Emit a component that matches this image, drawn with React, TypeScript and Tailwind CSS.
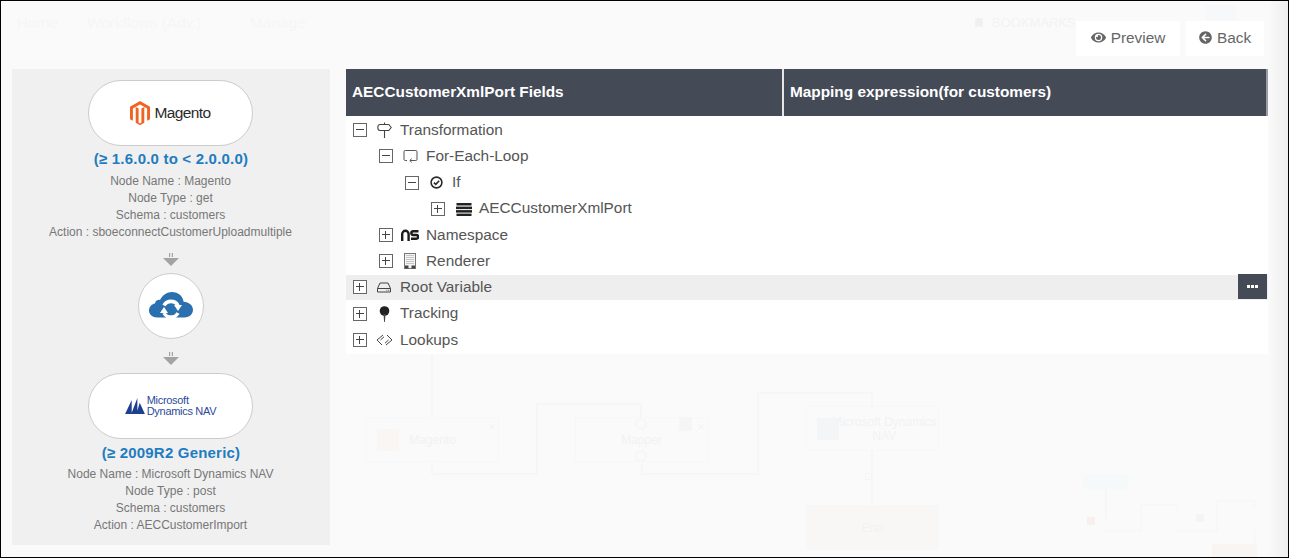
import { FaEye, FaArrowCircleLeft, FaBookmark, FaTimes } from "react-icons/fa";

const SANS = "font-['Liberation_Sans',Arial,sans-serif]";

function Signpost() {
  return (
    <svg width="15" height="16" viewBox="0 0 15 16" fill="none" stroke="#444" strokeWidth="1.1">
      <path d="M7.5 0.5v2M7.5 8.5V16" />
      <path d="M3 2.5h8.8L14.2 5.5 11.8 8.5H3C1.6 8.5 0.8 7 0.8 5.5S1.6 2.5 3 2.5z" />
    </svg>
  );
}

function LoopIcon() {
  return (
    <svg width="15" height="14" viewBox="0 0 15 14" fill="none" stroke="#555" strokeWidth="1">
      <path d="M4 11.5H2.2A1.2 1.2 0 0 1 1 10.3V2.7a1.2 1.2 0 0 1 1.2-1.2h10.6A1.2 1.2 0 0 1 14 2.7v7.6a1.2 1.2 0 0 1-1.2 1.2H7" />
      <path d="M8.8 9.6 6.8 11.5l2 1.9" />
    </svg>
  );
}

function CheckIcon() {
  return (
    <svg width="13" height="13" viewBox="0 0 13 13" fill="none" stroke="#2b2b2b" strokeWidth="1.6">
      <circle cx="6.5" cy="6.5" r="5.4" />
      <path d="M3.9 6.6 5.8 8.4 9.2 4.8" />
    </svg>
  );
}

function StackIcon() {
  return (
    <svg width="16" height="14" viewBox="0 0 16 14" fill="#222">
      <rect x="0.5" y="1" width="15" height="2.5" />
      <rect x="0" y="4.6" width="16" height="2.5" />
      <rect x="0" y="8.1" width="16" height="2.5" />
      <rect x="0.5" y="11.6" width="15" height="2.4" />
    </svg>
  );
}

function NsIcon() {
  return (
    <svg width="18" height="12" viewBox="0 0 18 12" fill="none" stroke="#1c1c1c" strokeWidth="2.4">
      <path d="M1.2 12V5a3.2 3.2 0 0 1 6.4 0v7" />
      <path d="M17.5 2.2h-5.3a1.9 1.9 0 0 0 0 3.8h3a1.9 1.9 0 0 1 0 3.8H10" />
    </svg>
  );
}

function BuildingIcon() {
  return (
    <svg width="12" height="16" viewBox="0 0 12 16" fill="none">
      <rect x="0.5" y="0.5" width="11" height="15" stroke="#777" fill="#f4f4f4" />
      <path d="M2.5 2.5h7M2.5 4.5h7M2.5 6.5h7M2.5 8.5h7M2.5 10.5h7" stroke="#999" strokeDasharray="1 1" />
      <rect x="1" y="12.5" width="3.5" height="3" fill="#444" />
      <rect x="7.5" y="12.5" width="3.5" height="3" fill="#444" />
    </svg>
  );
}

function DriveIcon() {
  return (
    <svg width="14" height="11" viewBox="0 0 14 11" fill="none" stroke="#444" strokeWidth="1">
      <path d="M3 1h8l2.5 5.5V10H.5V6.5z" />
      <path d="M.5 6.5h13" />
      <path d="M9.5 8.3h.8M11.3 8.3h.8" />
    </svg>
  );
}

function PinIcon() {
  return (
    <svg width="11" height="16" viewBox="0 0 11 16" fill="#222">
      <circle cx="5.5" cy="5" r="4.8" />
      <path d="M4.5 8h2L5.9 16H5.1z" fill="#444" />
    </svg>
  );
}

function LookupIcon() {
  return (
    <svg width="17" height="12" viewBox="0 0 17 12" fill="none" stroke="#444" strokeWidth="1">
      <path d="M7 1 1 6l5 5M4.5 6 8 2.8" />
      <path d="M10 11l6-5-5-5M12.5 6 9 9.2" />
    </svg>
  );
}

function Toggle({ open }: { open: boolean }) {
  return (
    <span className="relative h-[14px] w-[14px] shrink-0 border border-[#666] bg-white">
      <span className="absolute left-[2px] top-[5px] h-px w-[8px] bg-[#444]" />
      {!open && <span className="absolute left-[5px] top-[2px] h-[8px] w-px bg-[#444]" />}
    </span>
  );
}

const rows = [
  { label: "Transformation", depth: 0, open: true, icon: <Signpost /> },
  { label: "For-Each-Loop", depth: 1, open: true, icon: <LoopIcon /> },
  { label: "If", depth: 2, open: true, icon: <CheckIcon /> },
  { label: "AECCustomerXmlPort", depth: 3, open: false, icon: <StackIcon /> },
  { label: "Namespace", depth: 1, open: false, icon: <NsIcon /> },
  { label: "Renderer", depth: 1, open: false, icon: <BuildingIcon /> },
  { label: "Root Variable", depth: 0, open: false, icon: <DriveIcon />, active: true },
  { label: "Tracking", depth: 0, open: false, icon: <PinIcon /> },
  { label: "Lookups", depth: 0, open: false, icon: <LookupIcon /> },
];

function TreeRow({ row }: { row: (typeof rows)[number] }) {
  const indent = ["pl-[7px]", "pl-[33px]", "pl-[59px]", "pl-[85px]"][row.depth];
  const deep = row.depth === 3;
  return (
    <div
      className={`relative flex items-center ${indent} ${
        row.active ? "mb-[1.25px] h-[25px] bg-[#eeeeee]" : "h-[26.25px]"
      }`}
    >
      <Toggle open={row.open} />
      <span className={`flex h-4 w-6 shrink-0 items-center justify-center ${deep ? "ml-[7px]" : "ml-[5px]"}`}>{row.icon}</span>
      <span className={`text-[15.36px] text-[#555] ${deep ? "ml-[3px]" : "ml-1"} ${row.active ? "" : "-translate-y-px"}`}>
        {row.label}
      </span>
      {row.active && (
        <span className="absolute -top-px right-px flex h-[25px] w-[29px] items-center justify-center gap-px bg-[#454a57]">
          <span className="h-[3px] w-[3px] bg-white" />
          <span className="h-[3px] w-[3px] bg-white" />
          <span className="h-[3px] w-[3px] bg-white" />
        </span>
      )}
    </div>
  );
}

function MagentoLogo() {
  return (
    <div className="flex items-center gap-[4px]">
      <svg width="20" height="24" viewBox="0 0 20 24">
        <path fill="#f26322" d="M10 0 20 5.8v12.4l-2.9 1.6V7.5L10 3.4 2.9 7.5v12.3L0 18.2V5.8z" />
        <path fill="#f26322" d="M8.6 7.5v14.1L10 22.4l1.4-.8V7.5l2.9-1.6v15.9L10 24.2l-4.3-2.4V5.9z" />
      </svg>
      <span className="text-[15.5px] tracking-[-0.6px] text-[#2b2b2b]">Magento</span>
    </div>
  );
}

function CloudLogo() {
  return (
    <svg width="44" height="26" viewBox="0 0 44 26">
      <path fill="#2a70ae" d="M8 25.5C3.5 25.5 0 22.5 0 18.5c0-3.6 2.4-6.3 6-7 .4-2.6 2.6-4 5-3.6C13.4 3.2 18 0 23 0c6.3 0 11 4.4 11.6 9.8 5.3.1 9.4 3.7 9.4 8 0 4.4-3.4 7.7-8.6 7.7z" />
      <path fill="none" stroke="#fff" strokeWidth="3.6" d="M15 13.5A8 8 0 0 1 29 13.5M29 21A8 8 0 0 1 15 21" />
      <path fill="#fff" d="M25 13h8l-4 6zM11 21h8l-4-6z" />
    </svg>
  );
}

function DynamicsLogo() {
  return (
    <div className="flex items-center gap-[2px]">
      <svg width="20" height="17" viewBox="0 0 21 18">
        <path fill="#1d3f8f" d="M0 17 7 2v15zM6.5 17 13 0v17zM12 17 15.5 5 21 17z" />
      </svg>
      <span className="flex flex-col text-[11px] leading-[11.5px] tracking-[-0.3px] text-[#2c4a9a]">
        <span>Microsoft</span>
        <span>Dynamics NAV</span>
      </span>
    </div>
  );
}

function Pill({ children }: { children: React.ReactNode }) {
  return (
    <div className="mr-px flex h-[66px] w-[165px] items-center justify-center rounded-[33px] border border-[#cccccc] bg-white">
      {children}
    </div>
  );
}

function DownArrow() {
  return (
    <svg width="16" height="14" viewBox="0 0 16 14" fill="#a3a3a3">
      <path d="M6 0h1.2v4H6zM8.8 0H10v4H8.8z" />
      <path d="M0 5h16l-8 8z" />
    </svg>
  );
}

function NodeInfo({ title, lines, low }: { title: string; lines: string[]; low?: boolean }) {
  return (
    <div className="flex flex-col items-center">
      <div className={`mt-1 text-[15px] font-bold leading-[18px] tracking-[0.2px] text-[#1f7cc0] ${low ? "translate-y-px" : ""}`}>
        {title}
      </div>
      <div className="mr-px mt-[5px] flex flex-col items-center text-[12px] leading-[17px] text-[#777777]">
        {lines.map((l) => (
          <div key={l}>{l}</div>
        ))}
      </div>
    </div>
  );
}

function GhostNode({ className, label }: { className: string; label: string }) {
  return (
    <div className={`absolute flex items-center justify-center border border-[#f7f7f7] text-[12px] text-[#f2f2f2] ${className}`}>
      {label}
    </div>
  );
}

/* the page behind the modal, barely visible through the white overlay */
function Backdrop() {
  return (
    <div className="absolute inset-0">
      <div className="absolute left-[16px] top-[10px] text-[15.36px] text-[#f6f6f6]">Home</div>
      <div className="absolute left-[86px] top-[10px] text-[15.36px] text-[#f6f6f6]">Workflows (Adv.)</div>
      <div className="absolute left-[249px] top-[10px] text-[15.36px] text-[#f6f6f6]">Manage</div>
      <div className="absolute left-[973px] top-[12px] flex items-center gap-2 text-[13px] text-[#f3f3f3]">
        <FaBookmark className="h-[10px] w-[10px] text-[#f0f0f0]" />
        BOOKMARKS
      </div>
      <div className="absolute left-[1205px] top-[4px] h-[17px] w-[30px] bg-[#f7f8f9]" />

      <svg className="absolute left-0 top-0" width="1289" height="558" fill="none" stroke="#f5f5f5" strokeWidth="1.5">
        <path d="M431 354v62" />
        <path d="M431 462v11h105v-70h104v14" />
        <path d="M641 462v11h116v-81h114v13" />
        <path d="M871 450v54" />
        <path d="M1105 488v30" />
        <path d="M1104 530h36v-26h36v6M1176 530h40v-30h38v6M1254 528v22" strokeWidth="1" />
        <circle cx="640" cy="423" r="5" />
        <circle cx="640" cy="455" r="5" />
      </svg>

      <GhostNode className="left-[365px] top-[416px] h-[45px] w-[133px]" label="Magento" />
      <div className="absolute left-[376px] top-[428px] h-[22px] w-[22px] bg-[#f9f6f3]" />
      <GhostNode className="left-[574px] top-[416px] h-[45px] w-[133px]" label="Mapper" />
      <div className="absolute left-[678px] top-[416px] h-[14px] w-[13px] bg-[#f5f5f5]" />
      <GhostNode className="left-[805px] top-[405px] h-[45px] w-[133px] pl-6 text-center leading-[14px]" label="Microsoft Dynamics NAV" />
      <div className="absolute left-[816px] top-[417px] h-[22px] w-[22px] bg-[#f4f5f7]" />
      <GhostNode className="left-[805px] top-[504px] h-[45px] w-[133px] bg-[#f9f7f6]" label="End" />
      <div className="absolute left-[864px] top-[472px] h-[7px] w-[7px] border border-[#f2f4f7]" />
      <FaTimes className="absolute left-[487px] top-[422px] h-2 w-2 text-[#f4f4f4]" />
      <FaTimes className="absolute left-[696px] top-[422px] h-2 w-2 text-[#f4f4f4]" />

      <div className="absolute left-[1082px] top-[473px] h-[15px] w-[45px] bg-[#f5f9f9]" />
      <div className="absolute left-[1086px] top-[516px] h-[8px] w-[8px] bg-[#f9efed]" />
      <div className="absolute left-[1195px] top-[513px] h-[8px] w-[8px] bg-[#f3f4f5]" />
      <div className="absolute left-[1211px] top-[543px] h-[13px] w-[45px] bg-[#f9f5f2]" />

      <div className="absolute bottom-0 right-0 top-0 w-[20px] bg-gradient-to-r from-[#fafafa] to-[#eeeeee]" />
    </div>
  );
}

export default function App() {
  return (
    <div className={`relative h-[558px] w-[1289px] overflow-hidden border border-black bg-[#fafafa] ${SANS}`}>
      <Backdrop />

      <div className="relative flex flex-col">
        {/* action buttons */}
        <div className="mt-[20px] flex h-[35px] justify-end gap-[6px] pr-[24px]">
          <button className="flex w-[104px] items-center justify-center gap-[5px] bg-white pb-[2px] text-[15.36px] text-[#666666]">
            <FaEye className="h-[15px] w-[15px]" />
            Preview
          </button>
          <button className="flex w-[78px] items-center justify-center gap-[5px] bg-white pb-[2px] text-[15.36px] text-[#666666]">
            <FaArrowCircleLeft className="h-[13px] w-[13px]" />
            Back
          </button>
        </div>

        <div className="mt-[13px] flex items-start pl-[11px]">
          {/* node summary */}
          <aside className="flex h-[476px] w-[318px] flex-col items-center bg-[#f0f0f0] pt-[11px]">
            <Pill>
              <MagentoLogo />
            </Pill>
            <NodeInfo
              title="(≥ 1.6.0.0 to < 2.0.0.0)"
              lines={["Node Name : Magento", "Node Type : get", "Schema : customers", "Action : sboeconnectCustomerUploadmultiple"]}
            />
            <div className="mt-3 flex h-[14px] items-center">
              <DownArrow />
            </div>
            <div className="mt-[6px] flex h-[66px] w-[66px] items-center justify-center rounded-full border border-[#cccccc] bg-white pb-[3px]">
              <CloudLogo />
            </div>
            <div className="mt-[13px] flex h-[14px] items-center">
              <DownArrow />
            </div>
            <div className="mt-[7px]">
              <Pill>
                <DynamicsLogo />
              </Pill>
            </div>
            <NodeInfo
              low
              title="(≥ 2009R2 Generic)"
              lines={["Node Name : Microsoft Dynamics NAV", "Node Type : post", "Schema : customers", "Action : AECCustomerImport"]}
            />
          </aside>

          {/* mapping tree */}
          <section className="ml-[16px] w-[922px]">
            <div className="flex h-[46.5px] border-r-2 border-[#9a9da3] bg-[#454a57] text-[15.36px] font-bold text-white">
              <div className="flex w-[438px] items-center border-r-2 border-[#e5e5e5] pb-[2px] pl-[6px]">AECCustomerXmlPort Fields</div>
              <div className="flex flex-1 items-center pb-[2px] pl-[6px]">Mapping expression(for customers)</div>
            </div>
            <div className="bg-white pb-[0.75px] pt-[1.5px]">
              {rows.map((row) => (
                <TreeRow key={row.label} row={row} />
              ))}
            </div>
          </section>
        </div>
      </div>
    </div>
  );
}
